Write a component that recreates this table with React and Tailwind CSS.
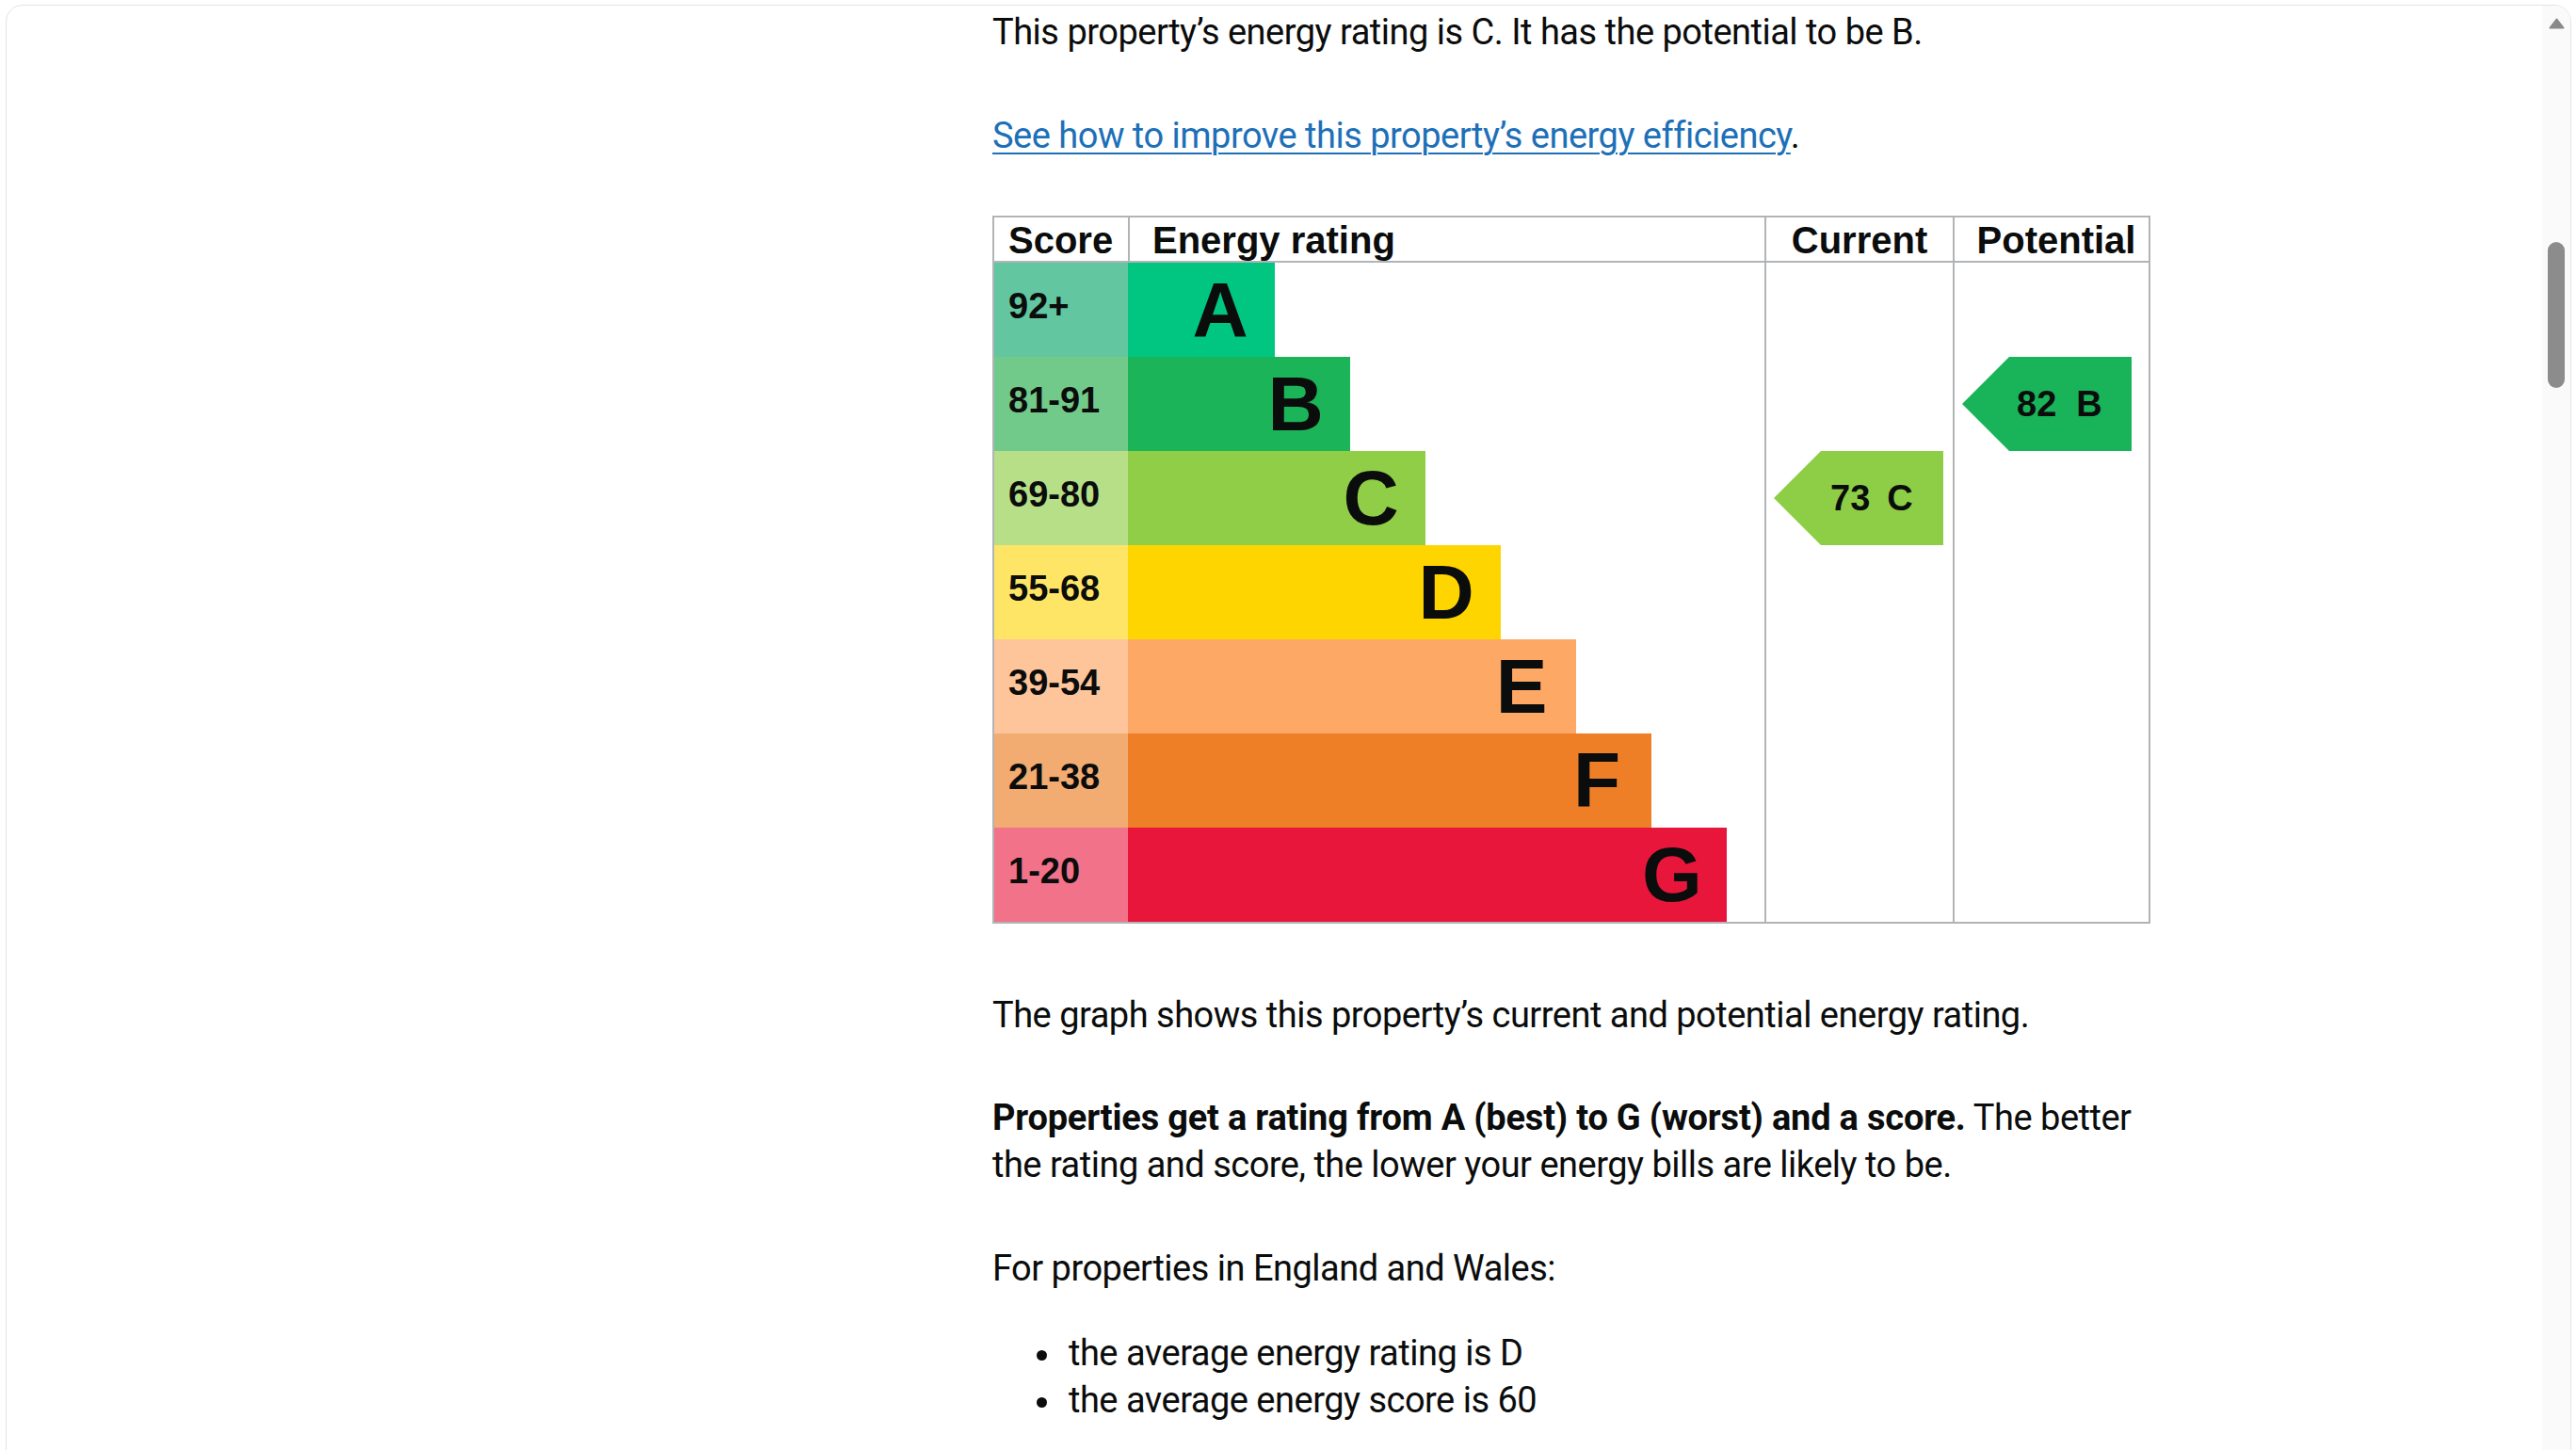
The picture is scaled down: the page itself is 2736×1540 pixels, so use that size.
const bands = [
  { score: "92+", letter: "A", width: 156, light: "bg-[#62c6a0]", dark: "bg-[#00c681]" },
  { score: "81-91", letter: "B", width: 236, light: "bg-[#72ca8a]", dark: "bg-[#1bb458]" },
  { score: "69-80", letter: "C", width: 316, light: "bg-[#b6df88]", dark: "bg-[#8fce46]" },
  { score: "55-68", letter: "D", width: 396, light: "bg-[#ffe566]", dark: "bg-[#ffd500]" },
  { score: "39-54", letter: "E", width: 476, light: "bg-[#fec49a]", dark: "bg-[#fda864]" },
  { score: "21-38", letter: "F", width: 556, light: "bg-[#f2ab70]", dark: "bg-[#ee7f26]" },
  { score: "1-20", letter: "G", width: 636, light: "bg-[#f2728a]", dark: "bg-[#e9163c]" },
];

function Arrow({ score, letter, color, pad, gap }) {
  return (
    <div
      className={`ml-[8px] w-[180px] h-[100px] flex items-center text-[38px] leading-none ${color} [clip-path:polygon(50px_0,100%_0,100%_100%,50px_100%,0_50%)]`}
    >
      <div className={`flex items-center ${pad} ${gap}`}>
        <span>{score}</span>
        <span>{letter}</span>
      </div>
    </div>
  );
}

function RatingChart() {
  return (
    <div className="w-[1230px] border-2 border-[#b1b4b6] grid grid-cols-[142px_676px_200px_208px] font-['Liberation_Sans',Arial,sans-serif] font-bold text-[#0b0c0c] tracking-normal">
      {/* header */}
      <div className="h-[48px] border-b-2 border-[#b1b4b6] pl-[15px] pt-[4px] text-[40px] leading-none">
        Score
      </div>
      <div className="h-[48px] border-b-2 border-l-2 border-[#b1b4b6] pl-[24px] pt-[4px] text-[40px] leading-none">
        Energy rating
      </div>
      <div className="h-[48px] border-b-2 border-l-2 border-[#b1b4b6] pt-[4px] text-[40px] leading-none text-center">
        Current
      </div>
      <div className="h-[48px] border-b-2 border-l-2 border-[#b1b4b6] pt-[4px] pl-[10px] text-[40px] leading-none text-center">
        Potential
      </div>

      {/* bands */}
      <div className="col-span-2 flex flex-col">
        {bands.map((b) => (
          <div key={b.letter} className="flex h-[100px]">
            <div className={`w-[142px] ${b.light} flex items-center pl-[15px] pb-2 text-[38px] leading-none`}>
              {b.score}
            </div>
            <div
              className={`${b.dark} flex items-center justify-end text-[82px] leading-none`}
              style={{ width: b.width }}
            >
              <span className="w-[116px] text-center">{b.letter}</span>
            </div>
          </div>
        ))}
      </div>

      {/* current */}
      <div className="border-l-2 border-[#b1b4b6] pt-[200px]">
        <Arrow score="73" letter="C" color="bg-[#8dce46]" pad="pl-[60px]" gap="gap-[18px]" />
      </div>

      {/* potential */}
      <div className="border-l-2 border-[#b1b4b6] pt-[100px]">
        <Arrow score="82" letter="B" color="bg-[#19b459]" pad="pl-[58px]" gap="gap-[21px]" />
      </div>
    </div>
  );
}

export default function App() {
  return (
    <div className="h-[1540px] overflow-hidden bg-white">
      <div className="ml-[6px] mt-[5px] w-[2725px] h-[1560px] border-[1.5px] border-[#e3e3e3] rounded-t-[18px] flex overflow-hidden">
        {/* page content */}
        <div className="flex-1 pl-[1047px] pt-[3px] font-['Roboto',sans-serif] text-[38px] leading-[50px] tracking-[-0.5px] text-[#0b0c0c]">
          <div className="w-[1230px]">
            <p className="mb-[60px]">
              This property’s energy rating is C. It has the potential to be B.
            </p>
            <p className="mb-[60px]">
              <a
                href="#"
                className="text-[#1d70b8] underline decoration-2 underline-offset-[5px]"
              >
                See how to improve this property’s energy efficiency
              </a>
              .
            </p>

            <div className="mb-[72px]">
              <RatingChart />
            </div>

            <p className="mb-[59px]">
              The graph shows this property’s current and potential energy rating.
            </p>
            <p className="mb-[60px]">
              <strong className="font-bold tracking-[-0.2px]">
                Properties get a rating from A (best) to G (worst) and a score.
              </strong>{" "}
              The better the rating and score, the lower your energy bills are likely to be.
            </p>
            <p className="mb-[40px]">For properties in England and Wales:</p>
            <ul>
              <li className="flex items-center h-[50px]">
                <span className="ml-[47px] mr-[23px] mt-[5px] w-[11px] h-[11px] rounded-full bg-[#0b0c0c]"></span>
                the average energy rating is D
              </li>
              <li className="flex items-center h-[50px]">
                <span className="ml-[47px] mr-[23px] mt-[5px] w-[11px] h-[11px] rounded-full bg-[#0b0c0c]"></span>
                the average energy score is 60
              </li>
            </ul>
          </div>
        </div>

        {/* scrollbar */}
        <div className="w-[30px] bg-[#fafafa] flex flex-col items-center">
          <svg className="mt-[13px]" width="17" height="12" viewBox="0 0 17 12">
            <polygon
              points="8.5,1.5 15.5,10.5 1.5,10.5"
              fill="#8a8a8a"
              stroke="#8a8a8a"
              strokeWidth="2"
              strokeLinejoin="round"
            />
          </svg>
          <div className="mt-[226px] w-[18px] h-[155px] rounded-full bg-[#8c8c8c]"></div>
        </div>
      </div>
    </div>
  );
}
